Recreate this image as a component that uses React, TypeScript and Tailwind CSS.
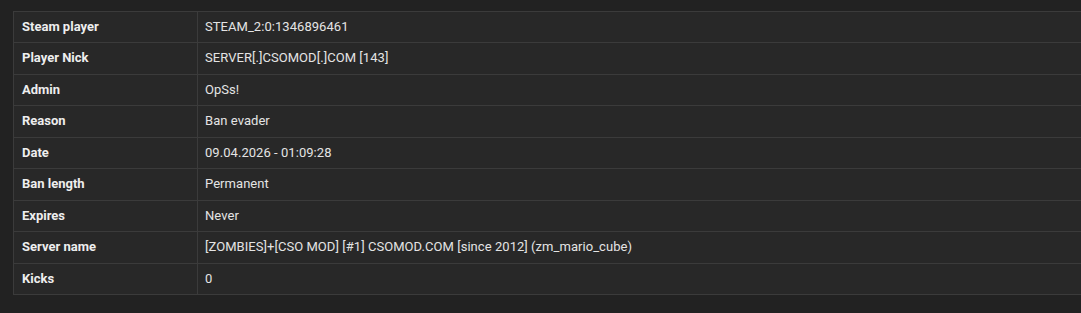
import React from "react";

const rows: [string, string][] = [
  ["Steam player", "STEAM_2:0:1346896461"],
  ["Player Nick", "SERVER[.]CSOMOD[.]COM [143]"],
  ["Admin", "OpSs!"],
  ["Reason", "Ban evader"],
  ["Date", "09.04.2026 - 01:09:28"],
  ["Ban length", "Permanent"],
  ["Expires", "Never"],
  ["Server name", "[ZOMBIES]+[CSO MOD] [#1] CSOMOD.COM [since 2012] (zm_mario_cube)"],
  ["Kicks", "0"],
];

export default function App() {
  return (
    <div
      className="w-[1081px] h-[313px] bg-[#222222] overflow-hidden pt-[11px] pl-[13px]"
      style={{ fontFamily: "Roboto, 'Liberation Sans', sans-serif" }}
    >
      <table className="w-[1100px] border-collapse bg-[#282828] text-[13px]">
        <tbody>
          {rows.map(([k, v]) => (
            <tr key={k}>
              <td className="w-[184px] border border-[#3b3b3b] px-[8px] py-[6px] leading-[18.44px] font-bold text-[#eeeeee]">
                {k}
              </td>
              <td className="border border-[#3b3b3b] px-[7px] py-[6px] leading-[18.44px] tracking-[0.05px] text-[#e4e4e4]">
                {v}
              </td>
            </tr>
          ))}
        </tbody>
      </table>
    </div>
  );
}
